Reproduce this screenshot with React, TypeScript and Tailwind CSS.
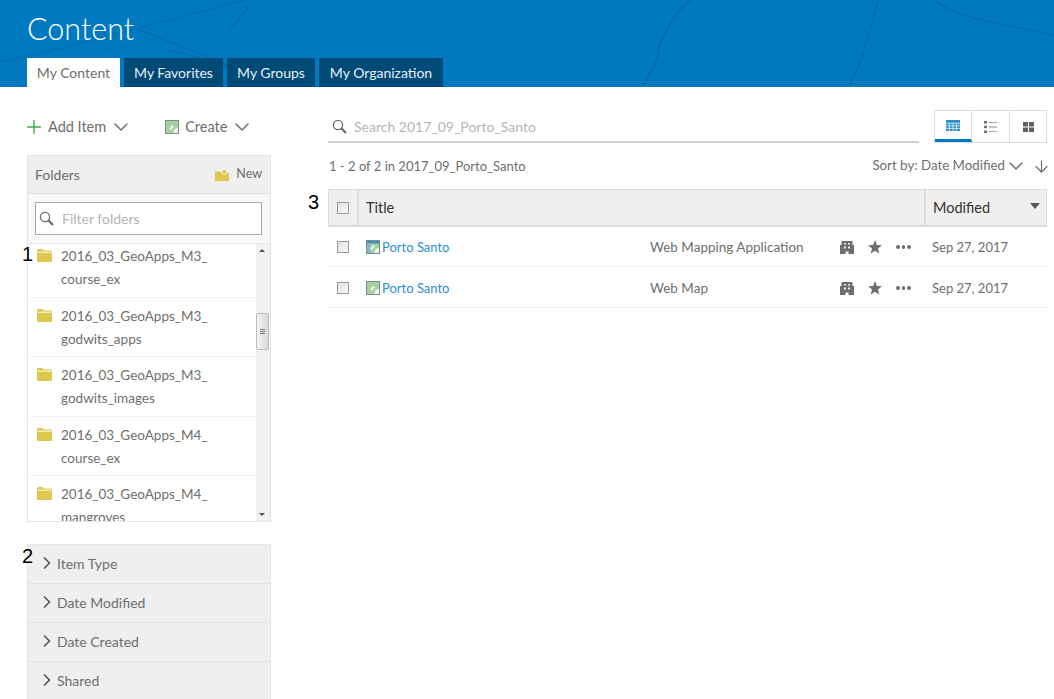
import { ChevronDown, ChevronRight, Plus, ArrowDown } from 'lucide-react';

const font = "font-['Lato','Open_Sans',sans-serif]";

function MapLines() {
  return (
    <svg className="absolute inset-0 h-full w-full" viewBox="0 0 1054 87" fill="none" stroke="#005e95" preserveAspectRatio="none">
      <path d="M0 62 C60 50 130 30 200 12 L245 0" strokeWidth="1" opacity="0.5" />
      <path d="M0 30 C40 50 90 60 150 40 L250 5" strokeWidth="1" opacity="0.3" />
      <path d="M140 30 L240 70 M170 50 L300 87 M230 30 L248 8" strokeWidth="1.5" opacity="0.45" />
      <path d="M643 86 C650 72 658 62 658 53 C660 40 672 15 690 0" strokeWidth="2" opacity="0.45" />
      <path d="M850 86 C856 72 860 62 863 53 L872 23 L878 0" strokeWidth="2" strokeDasharray="8 2" opacity="0.5" />
      <path d="M935 0 C945 8 953 13 975 18 L990 22 L1054 35" strokeWidth="1.5" opacity="0.5" />
      <path d="M992 0 V87 M880 10 L990 24 M860 40 L990 45 M665 55 L990 75" strokeWidth="0.75" opacity="0.25" />
      <path d="M320 40 L520 60 L700 50 M530 15 L540 87 M400 0 L420 87" strokeWidth="0.75" opacity="0.18" />
    </svg>
  );
}

function SearchIcon() {
  return (
    <svg viewBox="0 0 15 15" className="h-[15px] w-[15px] shrink-0" fill="none" stroke="#6e6e6e">
      <circle cx="6" cy="6" r="4.6" strokeWidth="1.3" />
      <path d="M9.4 9.4 L14 14" strokeWidth="2.2" />
    </svg>
  );
}

function Folder() {
  return (
    <svg viewBox="0 0 15 13" className="h-[13px] w-[15px]">
      <path d="M0 1.5 Q0 0 1.5 0 H5.5 L7 1.5 H13.5 Q15 1.5 15 3 V12 Q15 13 14 13 H1 Q0 13 0 12 Z" fill="#dcc84f" />
      <path d="M0.8 2.6 H14.2 V3.8 H0.8 Z" fill="#fbf6d8" />
    </svg>
  );
}

function NewFolder() {
  return (
    <svg viewBox="0 0 14 12" className="block h-[12px] w-[14px]">
      <path d="M0 2.5 H5 L7 4 H14 V12 H0 Z" fill="#dcc84f" />
      <circle cx="9.5" cy="2.8" r="2.6" fill="#dcc84f" stroke="#fff" strokeWidth="0.8" />
    </svg>
  );
}

function MapThumb({ app }: { app?: boolean }) {
  return (
    <svg viewBox="0 0 14 14" className="h-[14px] w-[14px] shrink-0">
      <rect x="0.5" y="0.5" width="13" height="13" fill="#a6d0a0" stroke="#7f8a8a" />
      {app && <rect x="1" y="1" width="12" height="2.5" fill="#3f8fc4" />}
      {app && <rect x="1" y="3.5" width="3" height="9.5" fill="#7fb6c9" />}
      <path d="M8 13 L9.5 9 L13 8 V13 Z M4 9 L7 5 L9 6 L6 10 Z" fill="#f0f5ee" />
    </svg>
  );
}

function Check() {
  return <span className="inline-block h-[12px] w-[12px] border border-[#9a9a9a] bg-gradient-to-br from-[#e4e4e4] to-[#f7f7f7]" />;
}

function Building() {
  return (
    <svg viewBox="0 0 14 13" className="h-[13px] w-[14px]" fill="#6e6e6e">
      <path d="M1.5 0 H12.5 V4 H14 V13 H8.5 V10.5 H5.5 V13 H0 V4 H1.5 Z" />
      <path d="M4 2 H6 V3.5 H4 Z M8 2 H10 V3.5 H8 Z M4 5.5 H6 V7.5 H4 Z M8 5.5 H10 V7.5 H8 Z" fill="#efefef" />
    </svg>
  );
}

function Star() {
  return (
    <svg viewBox="0 0 14 14" className="h-[14px] w-[14px]" fill="#6e6e6e">
      <path d="M7 0 L8.9 4.9 L14 5.2 L10 8.5 L11.3 13.6 L7 10.8 L2.7 13.6 L4 8.5 L0 5.2 L5.1 4.9 Z" />
    </svg>
  );
}

function Dots() {
  return (
    <span className="flex items-center gap-[2px]">
      <span className="h-[3.5px] w-[3.5px] rounded-full bg-[#6e6e6e]" />
      <span className="h-[3.5px] w-[3.5px] rounded-full bg-[#6e6e6e]" />
      <span className="h-[3.5px] w-[3.5px] rounded-full bg-[#6e6e6e]" />
    </span>
  );
}

const tabs = [
  { name: 'My Favorites', w: 'w-[99px]' },
  { name: 'My Groups', w: 'w-[88px]' },
  { name: 'My Organization', w: 'w-[124px]' },
];

const folders = [
  ['2016_03_GeoApps_M3_', 'course_ex'],
  ['2016_03_GeoApps_M3_', 'godwits_apps'],
  ['2016_03_GeoApps_M3_', 'godwits_images'],
  ['2016_03_GeoApps_M4_', 'course_ex'],
  ['2016_03_GeoApps_M4_', 'mangroves'],
];

const rows = [
  { type: 'Web Mapping Application', app: true, h: 'h-[40px] pt-[1px]' },
  { type: 'Web Map', app: false, h: 'h-[41px] pt-[2px]' },
];

export default function App() {
  return (
    <div className={`${font} relative h-[699px] w-[1054px] overflow-hidden bg-white text-[13.5px] text-[#6e6e6e]`}>
      {/* Header */}
      <header className="relative h-[87px] bg-[#0079c1] px-[27px]">
        <MapLines />
        <div className="relative flex h-full flex-col justify-between">
          <h1 className="pt-[9px] text-[30.5px] font-light leading-[38px] text-white">Content</h1>
          <nav className="flex h-[29px] gap-[4px] text-[14px]">
            <div className="flex w-[93px] items-center justify-center bg-white text-[#6e6e6e]">My Content</div>
            {tabs.map((t) => (
              <div key={t.name} className={`${t.w} flex items-center justify-center bg-[#004a78] text-[#e8eff4]`}>{t.name}</div>
            ))}
          </nav>
        </div>
      </header>

      <div className="flex pl-[27px] pr-[7px]">
        {/* Left column */}
        <aside className="w-[244px] shrink-0">
          <div className="flex h-[68px] items-center pt-[12px] text-[14.5px]">
            <Plus className="-ml-[4.5px] mr-[3.5px] h-[22px] w-[22px] text-[#35ac46]" strokeWidth={1.5} />
            <span>Add Item</span>
            <ChevronDown className="ml-[3px] h-[24px] w-[24px]" strokeWidth={1.5} />
            <span className="ml-[32px] mr-[6px]"><MapThumb /></span>
            <span>Create</span>
            <ChevronDown className="ml-[3px] h-[24px] w-[24px]" strokeWidth={1.5} />
          </div>

          <section className="border border-[#e6e6e6]">
            <div className="flex h-[38px] items-center justify-between border-b border-[#e2e2e2] bg-[#efefef] pl-[7px] pr-[8px]">
              <span className="text-[14px]">Folders</span>
              <span className="flex items-center gap-[7px] text-[12.5px]">
                <NewFolder />
                New
              </span>
            </div>
            <div className="h-[49px] bg-[#f8f8f8] pl-[7px] pr-[8px] pt-[8px]">
              <div className="flex h-[33px] items-center gap-[8px] border border-[#a9a9a9] bg-white pl-[3px]">
                <SearchIcon />
                <span className="text-[14px] text-[#b5b5b5]">Filter folders</span>
              </div>
            </div>
            <div className="flex h-[278px] overflow-hidden border-t border-[#e6e6e6]">
              <ul className="flex-1 overflow-hidden pl-[2px]">
                {folders.map(([a, b], i) => (
                  <li key={b + i} className={`flex h-[59.5px] border-b border-[#f0f0f0] pl-[7px] ${i === 0 ? '-mt-[6px]' : ''}`}>
                    <span className="mr-[9px] pt-[11px]"><Folder /></span>
                    <span className="pt-[7px] leading-[23px]">{a}<br />{b}</span>
                  </li>
                ))}
              </ul>
              <div className="relative w-[14px] shrink-0 bg-[#f1f1f1]">
                <span className="absolute left-[3px] top-[5px] h-0 w-0 border-x-[3px] border-b-[3px] border-x-transparent border-b-[#505050]" />
                <span className="absolute left-0 top-[69px] flex h-[37px] w-[13px] flex-col items-center justify-center gap-[1px] rounded-[2px] border border-[#bcbcbc] bg-gradient-to-r from-[#f4f4f4] to-[#d8d8d8]">
                  <i className="h-px w-[5px] bg-[#777]" />
                  <i className="h-px w-[5px] bg-[#777]" />
                  <i className="h-px w-[5px] bg-[#777]" />
                </span>
                <span className="absolute bottom-[5px] left-[3px] h-0 w-0 border-x-[3px] border-t-[3px] border-x-transparent border-t-[#505050]" />
              </div>
            </div>
          </section>

          <section className="mt-[22px] border-x border-t border-[#e6e6e6] bg-[#efefef]">
            {['Item Type', 'Date Modified', 'Date Created', 'Shared'].map((f) => (
              <div key={f} className="flex h-[39px] items-center border-b border-[#e2e2e2] pb-[2px] pl-[9px] text-[14px]">
                <ChevronRight className="h-[20px] w-[20px] text-[#555]" strokeWidth={2} />
                {f}
              </div>
            ))}
          </section>
        </aside>

        {/* Right column */}
        <main className="ml-[57px] flex-1">
          <div className="flex items-end justify-between pt-[23px]">
            <div className="flex h-[32px] w-[591px] items-center gap-[7px] border-b-2 border-[#d0d0d0] pl-[4px]">
              <SearchIcon />
              <span className="text-[14px] text-[#b5b5b5]">Search 2017_09_Porto_Santo</span>
            </div>
            <div className="flex h-[33px] w-[113px] border border-[#dcdcdc]">
              <div className="flex w-[37px] items-center justify-center border-b-[3px] border-r border-b-[#0079c1] border-r-[#dcdcdc]">
                <svg viewBox="0 0 14 11" className="h-[11px] w-[14px]">
                  <rect width="14" height="11" fill="#2b8fd0" />
                  <path d="M0 3.2 H14 M0 5.8 H14 M0 8.4 H14 M3.5 3 V11 M7 3 V11 M10.5 3 V11" stroke="#fff" strokeWidth="0.7" />
                </svg>
              </div>
              <div className="flex w-[38px] items-center justify-center border-r border-[#dcdcdc]">
                <svg viewBox="0 0 13 12" className="h-[12px] w-[13px]" fill="#6e6e6e">
                  <path d="M0 0 H3 V2.6 H0 Z M0 4.7 H3 V7.3 H0 Z M0 9.4 H3 V12 H0 Z" />
                  <path d="M5 1 H13 V1.8 H5 Z M5 5.6 H13 V6.4 H5 Z M5 10.2 H13 V11 H5 Z" fill="#8a8a8a" />
                </svg>
              </div>
              <div className="flex flex-1 items-center justify-center">
                <svg viewBox="0 0 11 10" className="h-[10px] w-[11px]" fill="#5f5f5f">
                  <path d="M0 0 H5 V4.4 H0 Z M6 0 H11 V4.4 H6 Z M0 5.6 H5 V10 H0 Z M6 5.6 H11 V10 H6 Z" />
                </svg>
              </div>
            </div>
          </div>

          <div className="flex h-[46px] items-center justify-between pl-[1px]">
            <span className="pt-[1px] text-[13px]">1 - 2 of 2 in 2017_09_Porto_Santo</span>
            <span className="-mr-[4px] flex items-center text-[13.3px]">
              Sort by: Date Modified
              <ChevronDown className="-ml-[1px] h-[24px] w-[24px]" strokeWidth={1.5} />
              <ArrowDown className="ml-[4px] h-[19px] w-[19px]" strokeWidth={1.5} />
            </span>
          </div>

          <div className="flex h-[38px] border border-[#dcdcdc] border-b-2 bg-[#efefef] text-[14.5px] text-[#333]">
            <div className="flex w-[30px] items-center justify-center border-r-2 border-[#dcdcdc]"><Check /></div>
            <div className="flex flex-1 items-center pl-[7px]">Title</div>
            <div className="relative flex w-[122px] items-center border-l-2 border-[#dcdcdc] pl-[7px]">
              Modified
              <span className="absolute right-[6px] top-[13px] h-0 w-0 border-x-[5px] border-t-[6px] border-x-transparent border-t-[#555]" />
            </div>
          </div>
          {rows.map((r) => (
            <div key={r.type} className={`flex ${r.h} items-center border-b border-[#efefef]`}>
              <div className="flex w-[29px] justify-center"><Check /></div>
              <div className="ml-[9px] flex w-[284px] items-center gap-[2px] text-[13px] text-[#2b8fd0]">
                <MapThumb app={r.app} />
                <span className="pt-[2px]">Porto Santo</span>
              </div>
              <div className="w-[190px]">{r.type}</div>
              <div className="flex w-[88px] items-center gap-[14px]">
                <Building />
                <Star />
                <Dots />
              </div>
              <div className="pl-[4px] pt-[2px] text-[13px]">Sep 27, 2017</div>
            </div>
          ))}
        </main>
      </div>

      {/* annotation numbers pasted over the screenshot */}
      <span className="absolute left-[22px] top-[242px] font-['Liberation_Sans',sans-serif] text-[20px] leading-[24px] text-black">1</span>
      <span className="absolute left-[22px] top-[544px] font-['Liberation_Sans',sans-serif] text-[20px] leading-[24px] text-black">2</span>
      <span className="absolute left-[308px] top-[190px] font-['Liberation_Sans',sans-serif] text-[20px] leading-[24px] text-black">3</span>
    </div>
  );
}
